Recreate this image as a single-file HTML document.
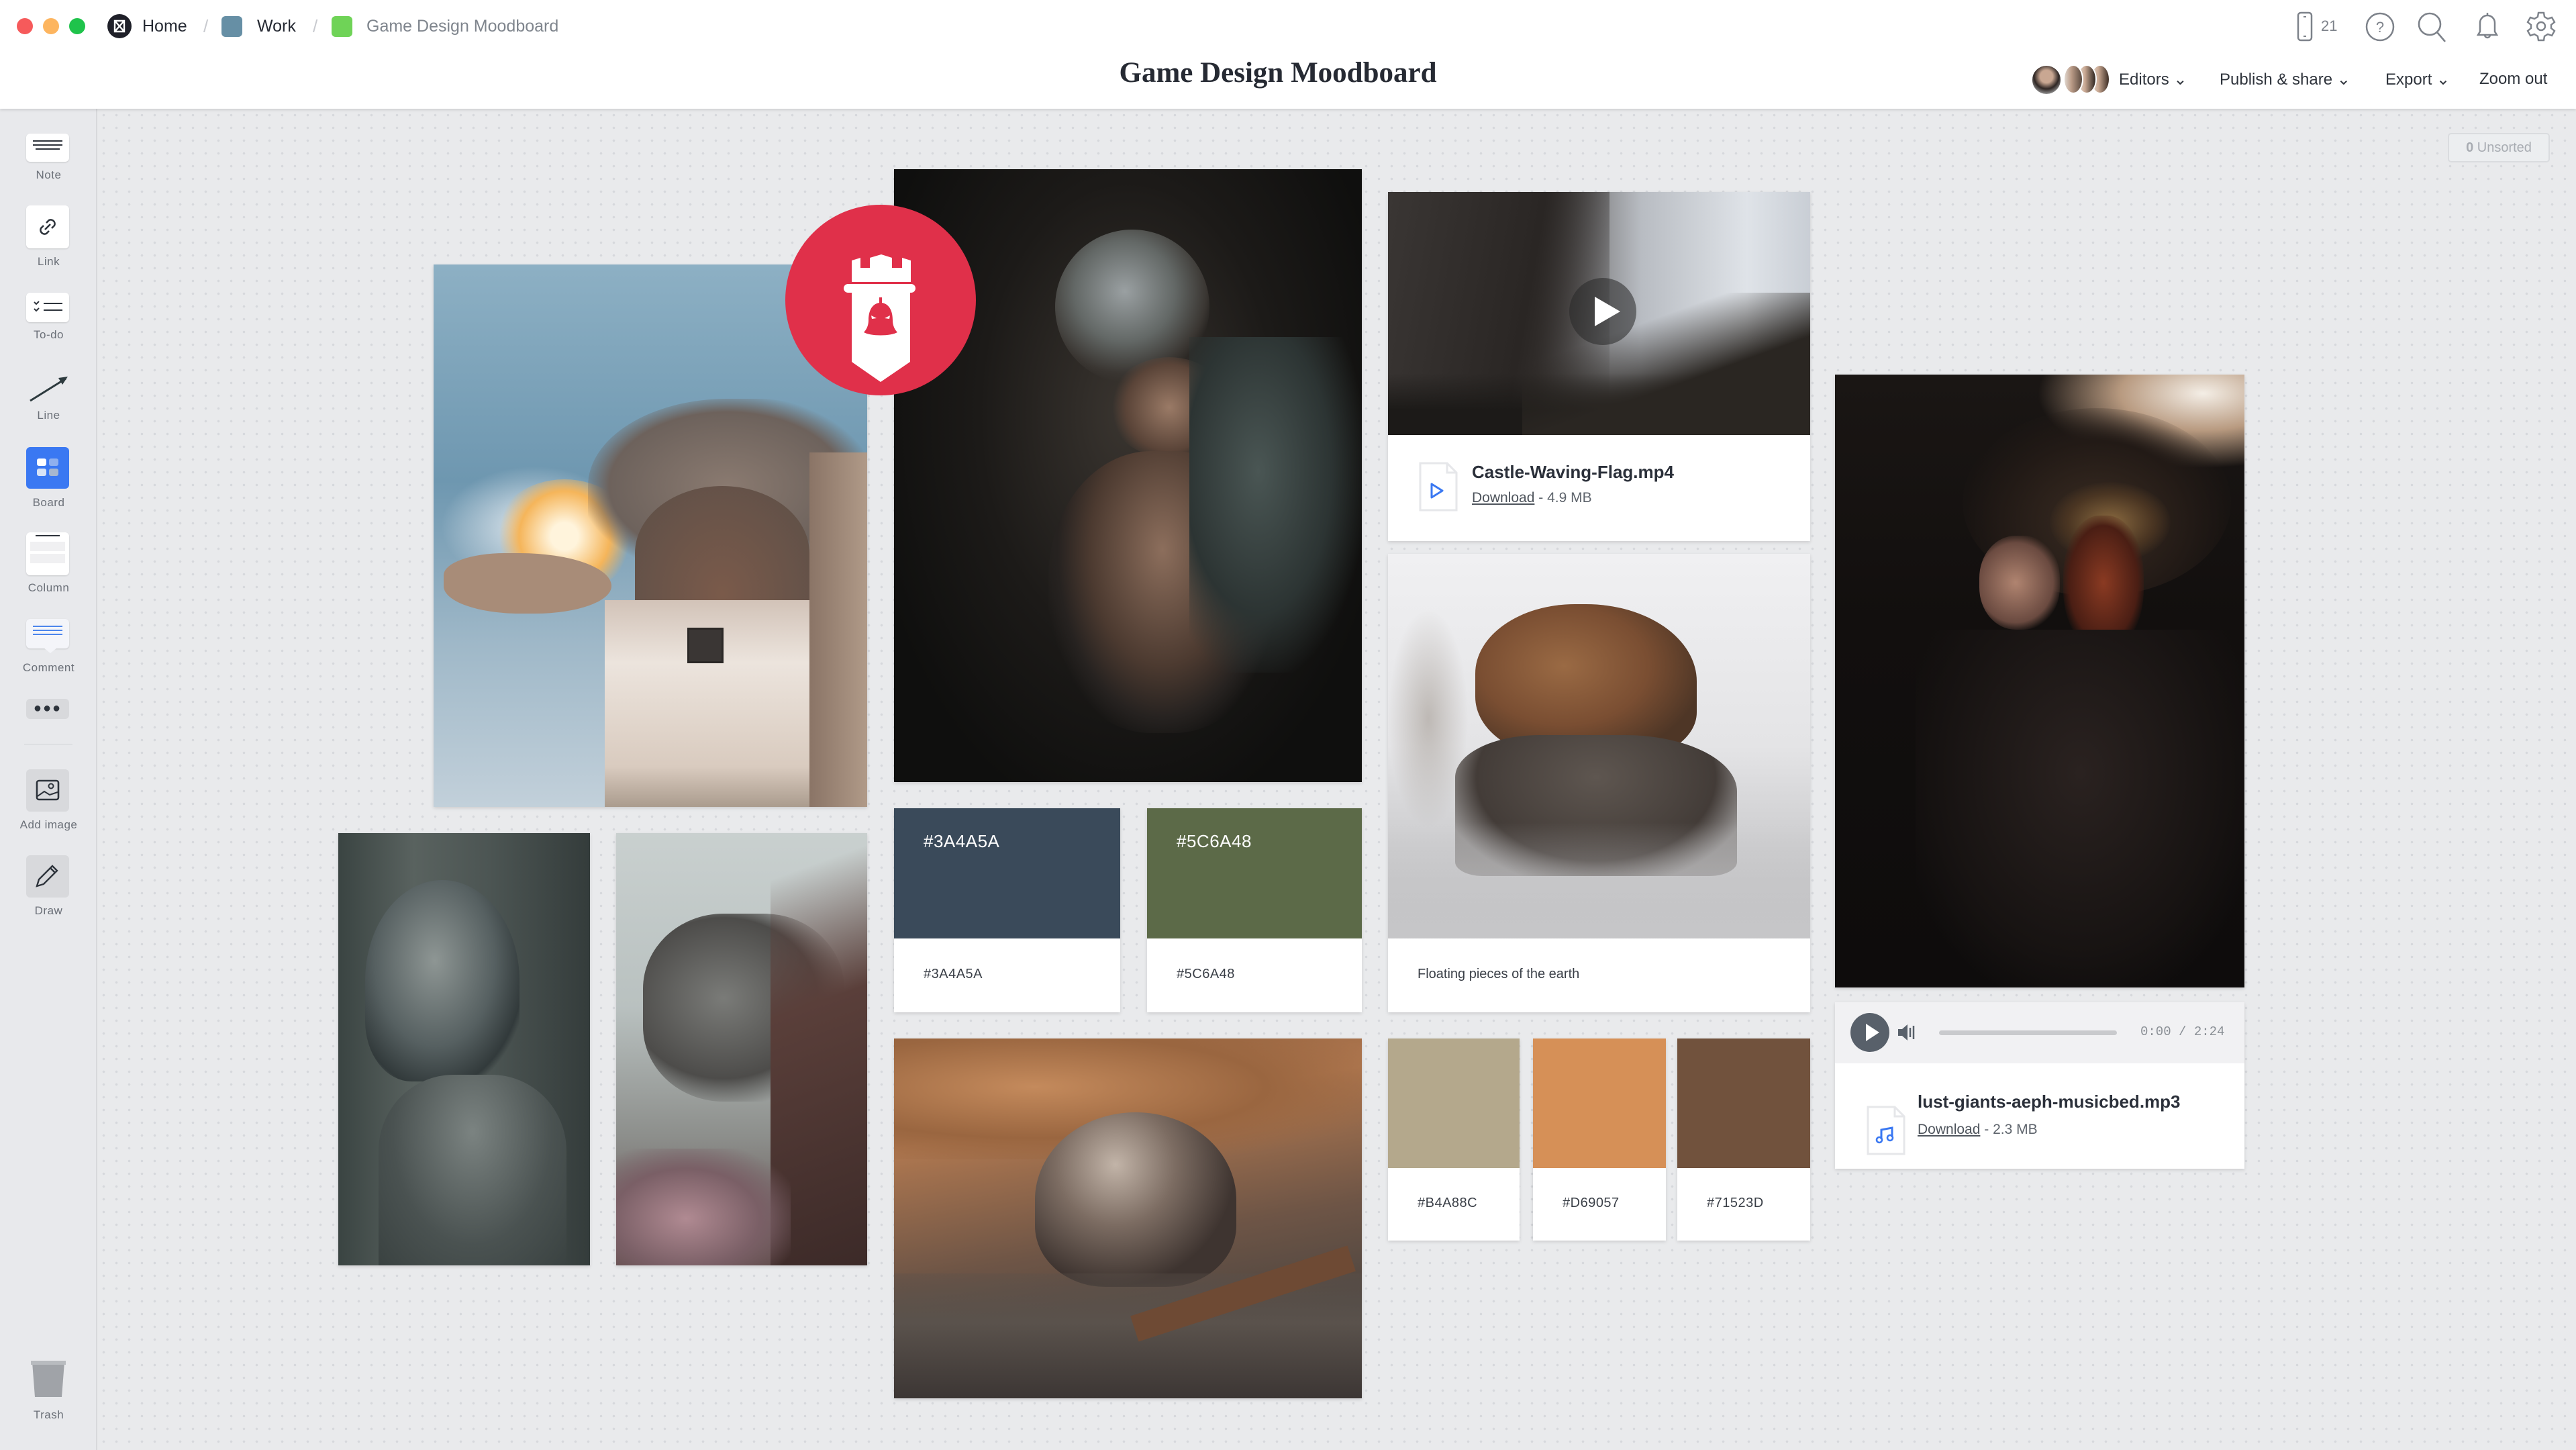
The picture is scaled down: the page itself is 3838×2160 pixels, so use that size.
<!DOCTYPE html>
<html><head><meta charset="utf-8"><style>
*{margin:0;padding:0;box-sizing:border-box}
html,body{width:3838px;height:2160px;overflow:hidden}
body{font-family:"Liberation Sans",sans-serif;background:#e9eaec;position:relative}
.abs{position:absolute}
#canvas{position:absolute;left:145px;top:162px;right:0;bottom:0;background-color:#e9eaec;background-image:radial-gradient(circle,#d6d8dc 1.6px,transparent 2px);background-size:19px 19px}
#hdr{position:absolute;left:0;top:0;width:3838px;height:162px;background:#fff;box-shadow:0 2px 4px rgba(0,0,0,.12);z-index:5}
#side{position:absolute;left:0;top:162px;width:145px;height:1998px;background:#e8e9ec;border-right:2px solid #d8d9dc;overflow:hidden}
.tool{position:absolute;left:39px;width:64px;background:#fff;border-radius:6px;box-shadow:0 1px 2px rgba(0,0,0,.15)}
.lbl{position:absolute;left:0;width:145px;text-align:center;font-size:17px;color:#6b7078;letter-spacing:.5px}
.card{position:absolute;box-shadow:0 2px 5px rgba(0,0,0,.13);overflow:hidden}
.sw{position:absolute;background:#fff;box-shadow:0 2px 5px rgba(0,0,0,.13)}
.sw .c{position:absolute;left:0;top:0;right:0}
.sw .t{position:absolute;left:44px;font-size:20px;color:#3a3f47;letter-spacing:.5px}
.sw .h{position:absolute;left:44px;top:34px;font-size:26px;color:#fff;letter-spacing:.5px}
.fn{font-size:26px;font-weight:bold;color:#2b303a}
.dl{font-size:21px;color:#5e646c}
.dl u{color:#4e545c}
</style></head><body>
<div id="canvas"></div>

<div id="hdr">
 <div class="abs" style="left:25px;top:27px;width:24px;height:24px;border-radius:50%;background:#f65a5b"></div>
 <div class="abs" style="left:64px;top:27px;width:24px;height:24px;border-radius:50%;background:#fdb55f"></div>
 <div class="abs" style="left:103px;top:27px;width:24px;height:24px;border-radius:50%;background:#1fc34b"></div>
 <div class="abs" style="left:160px;top:21px;width:36px;height:36px;border-radius:50%;background:#1f2029"><svg width="36" height="36" viewBox="0 0 36 36"><path d="M11 10h14v16H11z M11 10l14 16 M25 10L11 26" stroke="#fff" stroke-width="2.4" fill="none"/></svg></div>
 <div class="abs" style="left:212px;top:25px;font-size:25px;color:#262a33">Home</div>
 <div class="abs" style="left:303px;top:24px;font-size:26px;color:#c8cacf">/</div>
 <div class="abs" style="left:330px;top:24px;width:31px;height:31px;border-radius:6px;background:#668fa5"></div>
 <div class="abs" style="left:383px;top:25px;font-size:25px;color:#262a33">Work</div>
 <div class="abs" style="left:466px;top:24px;font-size:26px;color:#c8cacf">/</div>
 <div class="abs" style="left:494px;top:24px;width:31px;height:31px;border-radius:6px;background:#6fd357"></div>
 <div class="abs" style="left:546px;top:25px;font-size:25px;color:#7f858d">Game Design Moodboard</div>
 <div class="abs" style="left:0;width:3808px;top:84px;text-align:center;font-family:'Liberation Serif',serif;font-weight:bold;font-size:43px;color:#262a33">Game Design Moodboard</div>
 <svg class="abs" style="left:3420px;top:17px" width="30" height="46" viewBox="0 0 30 46"><rect x="4" y="2" width="20" height="41" rx="4" fill="none" stroke="#7d828a" stroke-width="2.5"/><path d="M12 8h4M12 37h4" stroke="#7d828a" stroke-width="2"/></svg>
 <div class="abs" style="left:3458px;top:26px;font-size:22px;color:#7d828a">21</div>
 <svg class="abs" style="left:3523px;top:17px" width="46" height="46" viewBox="0 0 46 46"><circle cx="23" cy="23" r="20" fill="none" stroke="#7d828a" stroke-width="2.5"/><text x="23" y="31" text-anchor="middle" font-size="22" fill="#7d828a" font-family="Liberation Sans">?</text></svg>
 <svg class="abs" style="left:3600px;top:16px" width="50" height="50" viewBox="0 0 50 50"><circle cx="20" cy="20" r="16" fill="none" stroke="#7d828a" stroke-width="2.6"/><path d="M31 32l12 14" stroke="#7d828a" stroke-width="2.6"/></svg>
 <svg class="abs" style="left:3683px;top:16px" width="46" height="48" viewBox="0 0 46 48"><path d="M9 36h28l-3-5V18a11 11 0 0 0-22 0v13z M19 36a4 4 0 0 0 8 0" fill="none" stroke="#7d828a" stroke-width="2.5"/><path d="M23 3v4" stroke="#7d828a" stroke-width="2.5"/></svg>
 <svg class="abs" style="left:3763px;top:16px" width="46" height="46" viewBox="0 0 46 46"><path d="M19 3h8l1 6 5 3 6-2 4 7-5 4v5l5 4-4 7-6-2-5 3-1 6h-8l-1-6-5-3-6 2-4-7 5-4v-5l-5-4 4-7 6 2 5-3z" fill="none" stroke="#7d828a" stroke-width="2.4"/><circle cx="23" cy="23" r="6" fill="none" stroke="#7d828a" stroke-width="2.4"/></svg>
 <div class="abs" style="left:3114px;top:96px;width:30px;height:44px;border-radius:50%;background:linear-gradient(90deg,#e6dcd4,#c9a892 40%,#3e2f26);border:2px solid #fff"></div>
 <div class="abs" style="left:3094px;top:96px;width:30px;height:44px;border-radius:50%;background:linear-gradient(90deg,#e6dcd4,#c9a892 40%,#2e2520);border:2px solid #fff"></div>
 <div class="abs" style="left:3074px;top:96px;width:30px;height:44px;border-radius:50%;background:linear-gradient(90deg,#e0d6ce,#b99a86 40%,#5a4a40);border:2px solid #fff"></div>
 <div class="abs" style="left:3026px;top:96px;width:46px;height:46px;border-radius:50%;background:radial-gradient(circle at 50% 38%,#c9a792 28%,#2e2624 55%,#9a9a9a 80%);border:2px solid #fff"></div>
 <div class="abs" style="left:3157px;top:104px;font-size:24px;color:#2f343c">Editors ⌄</div>
 <div class="abs" style="left:3307px;top:104px;font-size:24px;color:#2f343c">Publish &amp; share ⌄</div>
 <div class="abs" style="left:3554px;top:104px;font-size:24px;color:#2f343c">Export ⌄</div>
 <div class="abs" style="left:3694px;top:104px;font-size:24px;color:#2f343c">Zoom out</div>
</div>

<div class="abs" style="left:3647px;top:198px;width:152px;height:44px;background:#eceef0;border:2px solid #dadcdf;border-radius:5px;font-size:20px;color:#a8acb2;text-align:center;line-height:40px"><b>0</b> Unsorted</div>

<div id="side">
 <div class="tool" style="top:37px;height:42px"><svg width="64" height="42"><path d="M10 11h44M10 17h44M14 23h36" stroke="#2d333b" stroke-width="2"/></svg></div>
 <div class="lbl" style="top:89px">Note</div>
 <div class="tool" style="top:144px;height:64px"><svg width="64" height="64" viewBox="0 0 64 64"><path d="M30 26l4-4a6 6 0 0 1 8 8l-4 4M34 38l-4 4a6 6 0 0 1-8-8l4-4M28 36l8-8" stroke="#2d333b" stroke-width="2.6" fill="none"/></svg></div>
 <div class="lbl" style="top:218px">Link</div>
 <div class="tool" style="top:274px;height:44px"><svg width="64" height="44"><path d="M12 14l3 3 4-4M12 24l3 3 4-4" stroke="#2d333b" stroke-width="2" fill="none"/><path d="M26 16h28M26 26h28" stroke="#2d333b" stroke-width="2"/></svg></div>
 <div class="lbl" style="top:327px">To-do</div>
 <svg class="abs" style="left:40px;top:382px" width="64" height="56"><path d="M5 53L58 20" stroke="#2d3a3e" stroke-width="3"/><path d="M61 17l-14 2 6 10z" fill="#2d3a3e"/></svg>
 <div class="lbl" style="top:447px">Line</div>
 <div class="tool" style="top:504px;height:62px;background:#3a78f2;box-shadow:none"><svg width="64" height="62"><rect x="16" y="17" width="14" height="11" rx="3" fill="#fff"/><rect x="34" y="17" width="14" height="11" rx="3" fill="#8fb0ee"/><rect x="16" y="32" width="14" height="11" rx="3" fill="#d8e3f6"/><rect x="34" y="32" width="14" height="11" rx="3" fill="#a6b7cf"/></svg></div>
 <div class="lbl" style="top:577px">Board</div>
 <div class="tool" style="top:631px;height:64px"><svg width="64" height="64"><path d="M14 5h36" stroke="#2d333b" stroke-width="2"/><rect x="6" y="14" width="52" height="14" fill="#f0f0f2"/><rect x="6" y="32" width="52" height="14" fill="#f0f0f2"/></svg></div>
 <div class="lbl" style="top:704px">Column</div>
 <div class="tool" style="top:760px;height:44px;background:#f4f5f9"><svg width="64" height="44"><path d="M10 11h44M10 17h44M10 23h44" stroke="#4d86ec" stroke-width="2"/></svg></div>
 <div class="abs" style="left:65px;top:803px;border-left:10px solid transparent;border-right:10px solid transparent;border-top:8px solid #f4f5f9"></div>
 <div class="lbl" style="top:823px">Comment</div>
 <div class="abs" style="left:39px;top:879px;width:64px;height:30px;background:#d8d9dc;border-radius:6px;text-align:center;font-size:20px;line-height:28px;color:#2d333b;letter-spacing:2px">●●●</div>
 <div class="abs" style="left:36px;top:946px;width:72px;height:1px;background:#d0d2d5"></div>
 <div class="abs" style="left:39px;top:984px;width:64px;height:63px;background:#d8d9dc;border-radius:6px"><svg width="64" height="63"><rect x="16" y="17" width="32" height="28" rx="3" fill="none" stroke="#2d333b" stroke-width="2.6"/><circle cx="37" cy="25" r="3.5" fill="none" stroke="#2d333b" stroke-width="2"/><path d="M17 40l10-7 8 5 12-4" stroke="#2d333b" stroke-width="2" fill="none"/></svg></div>
 <div class="lbl" style="top:1057px">Add image</div>
 <div class="abs" style="left:39px;top:1112px;width:64px;height:63px;background:#d8d9dc;border-radius:6px"><svg width="64" height="63"><path d="M16 46l3-10 20-20 7 7-20 20z M36 19l7 7" stroke="#2d333b" stroke-width="2.4" fill="none"/></svg></div>
 <div class="lbl" style="top:1185px">Draw</div>
 <svg class="abs" style="left:44px;top:1864px" width="56" height="58"><path d="M4 3h48l-4 52H8z" fill="#a0a3a8"/><rect x="2" y="1" width="52" height="6" fill="#b8bbbf"/></svg>
 <div class="lbl" style="top:1936px">Trash</div>
</div>

<div class="card" style="left:646px;top:394px;width:646px;height:808px;background:linear-gradient(180deg,#8db0c4 0%,#6e97b0 40%,#9fb8c8 70%,#c2d0da 100%)">
 <div class="abs" style="left:10px;top:300px;width:280px;height:180px;border-radius:50%;background:radial-gradient(ellipse,rgba(245,247,250,.85),rgba(240,244,248,0) 70%)"></div>
 <div class="abs" style="left:90px;top:320px;width:210px;height:170px;border-radius:50%;background:radial-gradient(circle,#fff4dc 15%,#f5b55a 50%,rgba(230,140,60,0) 72%)"></div>
 <div class="abs" style="left:15px;top:430px;width:250px;height:90px;border-radius:40% 60% 50% 50%;background:#a88c78"></div>
 <div class="abs" style="left:230px;top:200px;width:416px;height:260px;border-radius:50% 40% 20% 30%;background:radial-gradient(ellipse at 50% 50%,#8a7a70,#6d625c 60%,rgba(110,100,95,0) 75%)"></div>
 <div class="abs" style="left:300px;top:330px;width:260px;height:200px;border-radius:50% 50% 0 0;background:radial-gradient(ellipse at 50% 80%,#7a5a4a,#5c4f48)"></div>
 <div class="abs" style="left:255px;top:500px;width:340px;height:310px;background:linear-gradient(180deg,#d2c3b8,#ece4dd 30%,#d9cbbf 80%,#a99a8c)"></div>
 <div class="abs" style="left:378px;top:541px;width:54px;height:53px;background:#3a3634;border:3px solid #2b2826"></div>
 <div class="abs" style="left:560px;top:280px;width:86px;height:528px;background:linear-gradient(90deg,#8a7466,#b09a88)"></div>
</div>

<div class="card" style="left:504px;top:1241px;width:375px;height:644px;background:linear-gradient(90deg,#3a4442,#59625f 30%,#4c5553 60%,#343c3b)">
 <div class="abs" style="left:40px;top:70px;width:230px;height:300px;border-radius:50% 50% 30% 30%;background:radial-gradient(ellipse at 45% 40%,#8e9694,#566061 50%,#323a3b 75%,rgba(0,0,0,0) 80%)"></div>
 <div class="abs" style="left:60px;top:360px;width:280px;height:284px;border-radius:40% 40% 0 0;background:radial-gradient(ellipse at 50% 30%,#7b8381,#4a5251 60%,#3a4241)"></div>
</div>

<div class="card" style="left:918px;top:1241px;width:374px;height:644px;background:linear-gradient(180deg,#c9d0cf,#b9c1c0 40%,#8d8f8c 70%,#5d4a48)">
 <div class="abs" style="left:40px;top:120px;width:300px;height:280px;border-radius:40%;background:radial-gradient(ellipse at 40% 45%,#7a7b78,#4d4c4a 55%,rgba(60,60,58,0) 75%)"></div>
 <div class="abs" style="left:230px;top:0;width:144px;height:644px;background:linear-gradient(160deg,rgba(60,40,36,0) 10%,#5a3f3a 40%,#3c2a28)"></div>
 <div class="abs" style="left:0;top:470px;width:260px;height:174px;background:radial-gradient(ellipse at 40% 60%,#b08a92,#7a5f66 50%,rgba(120,95,100,0) 80%)"></div>
</div>

<div class="card" style="left:1332px;top:252px;width:697px;height:913px;background:radial-gradient(ellipse at 50% 40%,#3a3530 0%,#1c1a18 45%,#0f0f0e 80%)">
 <div class="abs" style="left:240px;top:90px;width:230px;height:230px;border-radius:50%;background:radial-gradient(circle at 45% 40%,#9aa0a2,#636866 40%,#3a3632 65%,rgba(0,0,0,0) 72%)"></div>
 <div class="abs" style="left:320px;top:280px;width:180px;height:150px;border-radius:50%;background:radial-gradient(circle,#9a7a66,#5a4438 55%,rgba(0,0,0,0) 72%)"></div>
 <div class="abs" style="left:230px;top:420px;width:340px;height:420px;border-radius:45%;background:radial-gradient(ellipse at 50% 35%,#8c6e5c,#4c3a30 45%,#262220 65%,rgba(0,0,0,0) 75%)"></div>
 <div class="abs" style="left:440px;top:250px;width:257px;height:500px;background:radial-gradient(ellipse at 40% 40%,#4a5654,#2c3433 50%,rgba(0,0,0,0) 75%)"></div>
</div>

<div class="abs" style="left:1170px;top:305px;width:284px;height:284px;border-radius:50%;background:#e0304a;z-index:2">
 <svg width="284" height="284" viewBox="0 0 284 284"><path d="M99 83l13-4v15h14V79l17-5 16 5v15h15V79l13 4v32h-88z" fill="#fff"/><rect x="87" y="118" width="107" height="13" rx="6.5" fill="#fff"/><path d="M99 131h87v103l-44 30-43-30z" fill="#fff"/><path d="M140 138h4v8c12 2 16 14 16 26 0 8 3 14 7 18-10 6-40 6-50 0 4-4 7-10 7-18 0-12 4-24 16-26z" fill="#e0304a"/><path d="M128 165l8 4-7 1zM156 165l-8 4 7 1z" fill="#fff"/></svg>
</div>

<div class="sw" style="left:1332px;top:1204px;width:337px;height:304px"><div class="c" style="height:194px;background:#3a4a5a"></div><div class="h">#3A4A5A</div><div class="t" style="top:236px">#3A4A5A</div></div>
<div class="sw" style="left:1709px;top:1204px;width:320px;height:304px"><div class="c" style="height:194px;background:#5c6a48"></div><div class="h">#5C6A48</div><div class="t" style="top:236px">#5C6A48</div></div>

<div class="card" style="left:1332px;top:1547px;width:697px;height:536px;background:linear-gradient(170deg,#8a5a38,#b07850 25%,#6e5546 55%,#4a4440 80%,#3a3634)">
 <div class="abs" style="left:0;top:0;width:697px;height:180px;background:radial-gradient(ellipse at 30% 40%,#c48a5c,#9a6640 50%,rgba(150,100,60,0) 80%)"></div>
 <div class="abs" style="left:210px;top:110px;width:300px;height:260px;border-radius:50% 50% 35% 35%;background:radial-gradient(ellipse at 40% 30%,#c2b4a8,#7c6c62 35%,#3e3430 70%)"></div>
 <div class="abs" style="left:0;top:350px;width:697px;height:186px;background:linear-gradient(180deg,rgba(90,80,74,.3),#5a524c 40%,#3c3634);"></div>
 <div class="abs" style="left:350px;top:360px;width:340px;height:40px;transform:rotate(-18deg);background:#6e4a34"></div>
</div>

<div class="card" style="left:2068px;top:286px;width:629px;height:520px;background:#fff">
 <div class="abs" style="left:0;top:0;width:629px;height:362px;background:linear-gradient(90deg,#2a2826,#4a4644 35%,#b8bcc2 60%,#dfe3e8 85%,#c9ced5)">
  <div class="abs" style="left:0;top:0;width:330px;height:362px;background:linear-gradient(100deg,#3a3634,#2a2624 60%,rgba(40,36,34,0))"></div>
  <div class="abs" style="left:0;top:270px;width:629px;height:92px;background:linear-gradient(180deg,rgba(20,18,16,0),#1c1a18 60%)"></div>
  <div class="abs" style="left:200px;top:150px;width:429px;height:212px;background:linear-gradient(160deg,rgba(30,28,26,0) 30%,#2a2622 60%)"></div>
  <div class="abs" style="left:270px;top:128px;width:100px;height:100px;border-radius:50%;background:rgba(40,40,40,.55)"></div>
  <div class="abs" style="left:308px;top:156px;border-left:38px solid #fff;border-top:22px solid transparent;border-bottom:22px solid transparent"></div>
 </div>
 <svg class="abs" style="left:46px;top:402px" width="58" height="74"><path d="M2 2h40l14 14v56H2z" fill="#fff" stroke="#e6e7ea" stroke-width="3"/><path d="M42 2v14h14" fill="none" stroke="#e6e7ea" stroke-width="3"/><path d="M19 33l16 10-16 10z" fill="none" stroke="#3a78f2" stroke-width="3" stroke-linejoin="round"/></svg>
 <div class="abs fn" style="left:125px;top:402px">Castle-Waving-Flag.mp4</div>
 <div class="abs dl" style="left:125px;top:444px"><u>Download</u> - 4.9 MB</div>
</div>

<div class="card" style="left:2068px;top:825px;width:629px;height:683px;background:#fff">
 <div class="abs" style="left:0;top:0;width:629px;height:573px;background:linear-gradient(180deg,#f0f0f2,#e4e4e6 50%,#c9c9cb 80%,#b9b9bb)">
  <div class="abs" style="left:130px;top:75px;width:330px;height:230px;border-radius:45% 50% 30% 40%;background:radial-gradient(ellipse at 40% 40%,#9a6a44,#7a4e32 45%,#4e3626 75%)"></div>
  <div class="abs" style="left:100px;top:270px;width:420px;height:210px;border-radius:30% 40% 10% 10%;background:radial-gradient(ellipse at 50% 30%,#5e5650,#433c38 60%,rgba(70,64,60,.4) 80%)"></div>
  <div class="abs" style="left:0;top:400px;width:629px;height:173px;background:linear-gradient(180deg,rgba(210,210,212,0),rgba(200,200,202,.9))"></div>
  <div class="abs" style="left:0;top:80px;width:120px;height:330px;background:radial-gradient(ellipse,rgba(150,140,130,.5),rgba(150,140,130,0) 70%)"></div>
 </div>
 <div class="abs" style="left:44px;top:615px;font-size:20px;color:#3a3f47">Floating pieces of the earth</div>
</div>

<div class="sw" style="left:2068px;top:1547px;width:196px;height:301px"><div class="c" style="height:193px;background:#b4a88c"></div><div class="t" style="top:234px">#B4A88C</div></div>
<div class="sw" style="left:2284px;top:1547px;width:198px;height:301px"><div class="c" style="height:193px;background:#d69057"></div><div class="t" style="top:234px">#D69057</div></div>
<div class="sw" style="left:2499px;top:1547px;width:198px;height:301px"><div class="c" style="height:193px;background:#71523d"></div><div class="t" style="top:234px">#71523D</div></div>

<div class="card" style="left:2734px;top:558px;width:610px;height:913px;background:linear-gradient(180deg,#1a1614,#120f0e 40%,#0e0c0c)">
 <div class="abs" style="left:300px;top:0;width:310px;height:140px;background:radial-gradient(ellipse at 80% 20%,#f4eee6,#b89a80 35%,rgba(60,45,38,0) 70%)"></div>
 <div class="abs" style="left:190px;top:50px;width:400px;height:280px;border-radius:50%;background:radial-gradient(ellipse at 50% 60%,#3a2c22,#221a16 50%,rgba(0,0,0,0) 75%)"></div>
 <div class="abs" style="left:320px;top:160px;width:180px;height:120px;border-radius:50%;background:radial-gradient(ellipse,#8a6a40,#4a3522 50%,rgba(0,0,0,0) 72%)"></div>
 <div class="abs" style="left:215px;top:240px;width:120px;height:140px;border-radius:45%;background:radial-gradient(ellipse at 45% 50%,#b08470,#6a4a40 60%,rgba(0,0,0,0) 75%)"></div>
 <div class="abs" style="left:340px;top:210px;width:120px;height:200px;border-radius:45%;background:radial-gradient(ellipse,#8a3a22,#4a1e14 60%,rgba(0,0,0,0) 75%)"></div>
 <div class="abs" style="left:120px;top:380px;width:490px;height:533px;background:radial-gradient(ellipse at 50% 40%,#2a2220,#171312 60%,rgba(0,0,0,0) 80%)"></div>
</div>

<div class="card" style="left:2734px;top:1493px;width:610px;height:248px;background:#fff">
 <div class="abs" style="left:0;top:0;width:610px;height:91px;background:#f1f1f3"></div>
 <div class="abs" style="left:23px;top:16px;width:58px;height:58px;border-radius:50%;background:#58606a"></div>
 <div class="abs" style="left:46px;top:32px;border-left:20px solid #fff;border-top:13px solid transparent;border-bottom:13px solid transparent"></div>
 <svg class="abs" style="left:92px;top:30px" width="28" height="30"><path d="M2 10h6l8-7v24l-8-7H2z" fill="#58606a"/><path d="M20 8v14M25 5v20" stroke="#58606a" stroke-width="2.5"/></svg>
 <div class="abs" style="left:155px;top:42px;width:265px;height:7px;border-radius:4px;background:#c9cacd"></div>
 <div class="abs" style="left:455px;top:33px;font-family:'Liberation Mono',monospace;font-size:19px;color:#8a8f95">0:00 / 2:24</div>
 <svg class="abs" style="left:47px;top:154px" width="58" height="74"><path d="M2 2h40l14 14v56H2z" fill="#fff" stroke="#e6e7ea" stroke-width="3"/><path d="M42 2v14h14" fill="none" stroke="#e6e7ea" stroke-width="3"/><path d="M22 50V36l16-3v14" fill="none" stroke="#3a78f2" stroke-width="3"/><circle cx="19" cy="51" r="4" fill="none" stroke="#3a78f2" stroke-width="2.6"/><circle cx="35" cy="48" r="4" fill="none" stroke="#3a78f2" stroke-width="2.6"/></svg>
 <div class="abs fn" style="left:123px;top:133px">lust-giants-aeph-musicbed.mp3</div>
 <div class="abs dl" style="left:123px;top:178px"><u>Download</u> - 2.3 MB</div>
</div>
</body></html>
